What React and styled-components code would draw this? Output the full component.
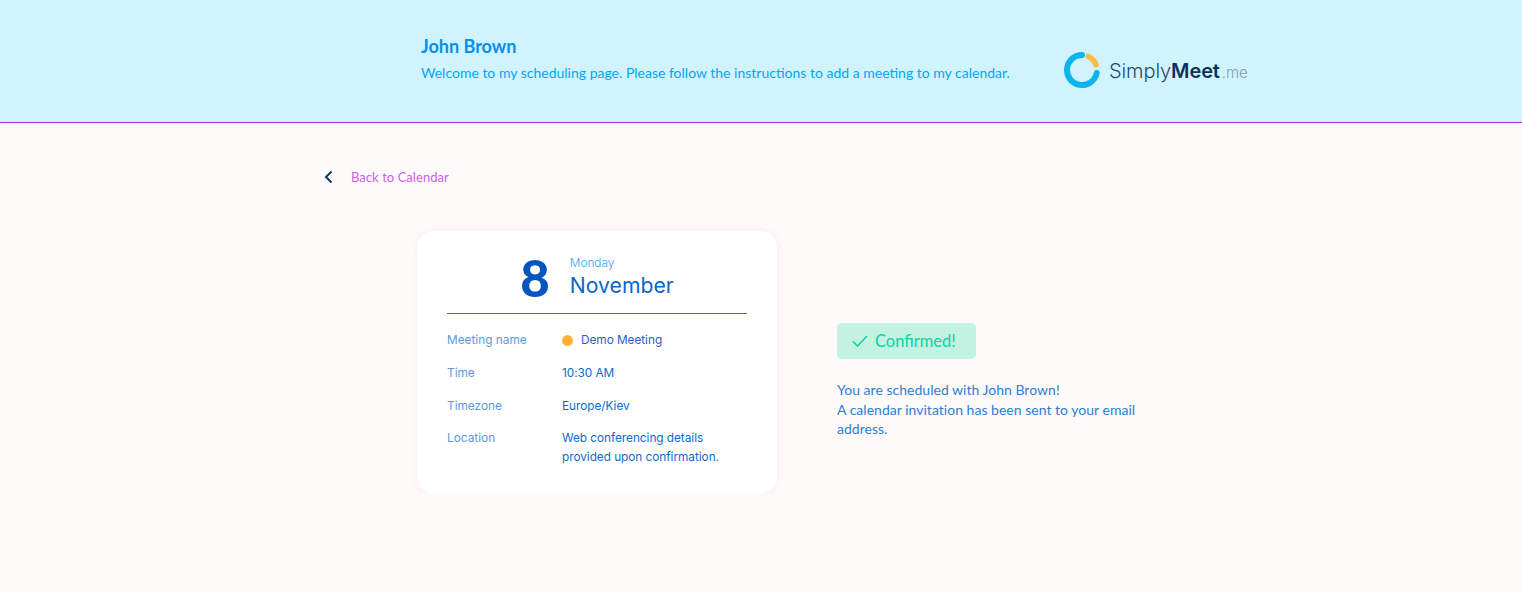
import styled, { createGlobalStyle } from "styled-components";

const GlobalStyle = createGlobalStyle`
  * {
    box-sizing: border-box;
  }
  body {
    margin: 0;
    background: #fffafa;
    font-family: "Lato", "Liberation Sans", sans-serif;
  }
`;

const rows = [
  { label: "Meeting name", value: "Demo Meeting", dot: true },
  { label: "Time", value: "10:30 AM" },
  { label: "Timezone", value: "Europe/Kiev" },
  { label: "Location", value: "Web conferencing details provided upon confirmation." },
];

function App() {
  return (
    <>
      <GlobalStyle />
      <Header>
        <Intro>
          <Name>John Brown</Name>
          <Welcome>
            Welcome to my scheduling page. Please follow the instructions to add a meeting to my calendar.
          </Welcome>
        </Intro>
        <Logo>
          <svg width="37" height="37" viewBox="0 0 37 37" fill="none">
            <path d="M18 3A15 15 0 1 0 32.700 21" stroke="#0cb4ee" strokeWidth="6" strokeLinecap="round" />
            <path d="M24.400 4.400A15 15 0 0 1 32 12.700" stroke="#fdb942" strokeWidth="5.500" strokeLinecap="round" />
          </svg>
          <LogoText>
            Simply<b>Meet</b>
            <small>.me</small>
          </LogoText>
        </Logo>
      </Header>
      <BackRow>
        <svg width="10" height="14" viewBox="0 0 10 14" fill="none">
          <path d="M7.500 1.500 2 7l5.500 5.500" stroke="#0a3a66" strokeWidth="2" />
        </svg>
        <BackLink>Back to Calendar</BackLink>
      </BackRow>
      <Main>
        <Card>
          <DateHead>
            <DayNumber>8</DayNumber>
            <div>
              <Weekday>Monday</Weekday>
              <Month>November</Month>
            </div>
          </DateHead>
          <Details>
            {rows.map((row) => (
              <Row key={row.label}>
                <Label>{row.label}</Label>
                <Value $strong={row.dot}>
                  {row.dot && <Dot />}
                  {row.value}
                </Value>
              </Row>
            ))}
          </Details>
        </Card>
        <Status>
          <Badge>
            <svg width="16" height="12" viewBox="0 0 16 12" fill="none">
              <path d="M1 6.500 5.500 11 15 1" stroke="#06d6a0" strokeWidth="1.500" />
            </svg>
            Confirmed!
          </Badge>
          <Message>
            You are scheduled with John Brown!
            <br />A calendar invitation has been sent to your email address.
          </Message>
        </Status>
      </Main>
    </>
  );
}

export default App;

const Header = styled.header`
  display: flex;
  height: 123px;
  padding: 36px 0 0 421px;
  background: #d1f3fd;
  border-bottom: 1px solid #9130f0;
`;

const Intro = styled.div`
  width: 643px;
`;

const Name = styled.h1`
  margin: 0;
  font-size: 18px;
  line-height: 21px;
  font-weight: 700;
  color: #0390ee;
`;

const Welcome = styled.p`
  margin: 7px 0 0;
  font-size: 14px;
  line-height: 17px;
  color: #06a5f5;
`;

const Logo = styled.div`
  display: flex;
  align-items: center;
  gap: 8px;
  height: 37px;
  margin-top: 16px;
`;

const LogoText = styled.span`
  font-family: "Inter", sans-serif;
  font-size: 20px;
  font-weight: 300;
  letter-spacing: -0.100px;
  color: #1f4c6e;
  b {
    font-weight: 600;
    color: #0a3558;
  }
  small {
    font-size: 15px;
    margin-left: 2px;
    font-weight: 300;
    color: #7f9fb0;
  }
`;

const BackRow = styled.div`
  display: flex;
  align-items: center;
  gap: 17px;
  padding: 47px 0 0 324px;
  height: 61px;
  line-height: 14px;
`;

const BackLink = styled.a`
  font-size: 13px;
  letter-spacing: 0.050px;
  color: #c763e4;
`;

const Main = styled.main`
  display: flex;
  align-items: flex-start;
  gap: 60px;
  padding: 47px 0 0 417px;
`;

const Card = styled.section`
  width: 360px;
  height: 262px;
  padding: 18px 30px 0;
  background: #fff;
  border-radius: 16px;
  box-shadow: 0 0 8px rgba(150, 110, 110, 0.1);
  font-family: "Inter", sans-serif;
`;

const DateHead = styled.div`
  display: flex;
  justify-content: center;
  align-items: flex-start;
  gap: 20px;
  height: 65px;
  border-bottom: 1px solid #7a46d8;
`;

const DayNumber = styled.div`
  font-family: "Lato", sans-serif;
  font-size: 51px;
  line-height: 58px;
  font-weight: 900;
  color: #0456bd;
`;

const Weekday = styled.div`
  margin-top: 7px;
  font-size: 11.800px;
  line-height: 14px;
  font-weight: 300;
  color: #3da2f5;
`;

const Month = styled.div`
  font-size: 21.200px;
  line-height: 28px;
  margin-top: 1px;
  font-weight: 400;
  color: #0a66c8;
`;

const Details = styled.div`
  display: flex;
  flex-direction: column;
  padding-top: 17px;
  gap: 13.800px;
`;

const Row = styled.div`
  display: grid;
  grid-template-columns: 115px 170px;
  font-size: 11.800px;
  line-height: 19px;
`;

const Label = styled.div`
  letter-spacing: 0.020px;
  color: #5a9ae0;
`;

const Value = styled.div`
  display: flex;
  align-items: center;
  letter-spacing: -0.030px;
  color: ${(props) => (props.$strong ? "#2b5cc8" : "#0a6ccf")};
`;

const Dot = styled.span`
  flex: none;
  width: 11px;
  height: 11px;
  margin-right: 8px;
  border-radius: 50%;
  background: #ffb433;
`;

const Status = styled.div`
  width: 310px;
  margin-top: 92px;
`;

const Badge = styled.div`
  display: flex;
  align-items: center;
  gap: 7px;
  width: 139px;
  height: 36px;
  padding-left: 15px;
  font-size: 16.500px;
  color: #06d6a0;
  background: #c3f2e2;
  border-radius: 5px;
`;

const Message = styled.p`
  margin: 21px 0 0;
  font-size: 14px;
  line-height: 19.500px;
  letter-spacing: 0.020px;
  color: #2b7fd4;
`;
